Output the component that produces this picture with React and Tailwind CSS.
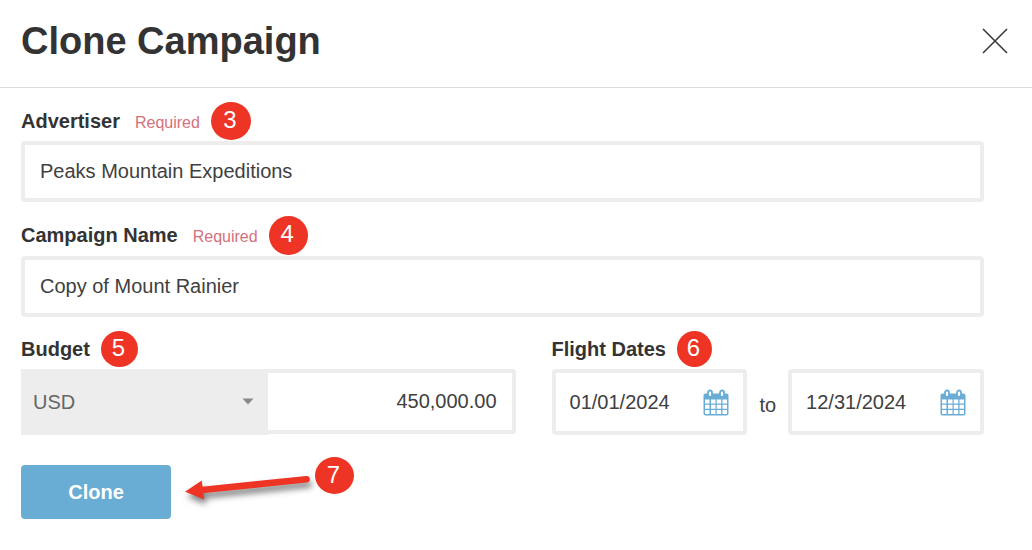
import { useState } from "react";
import clsx from "clsx";

const inputClass =
  "h-[61px] w-full rounded-[4px] border-4 border-[#ededed] bg-white px-[15px] text-[20px] text-[#404040] outline-none";

function Step({ number, className }) {
  return (
    <span
      className={clsx(
        "flex shrink-0 items-center justify-center rounded-[50%] bg-[#ee3424] pr-0.5 pb-0.5 text-[24px] leading-none text-white",
        className
      )}
    >
      {number}
    </span>
  );
}

function FieldLabel({ htmlFor, text, required, children }) {
  return (
    <div className="flex h-10 items-center gap-[11px]">
      <label
        htmlFor={htmlFor}
        className="flex items-baseline gap-[15px] text-[20px] font-bold whitespace-nowrap text-[#333]"
      >
        {text}
        {required && (
          <span className="text-[16px] font-normal text-[#d4717b]">
            Required
          </span>
        )}
      </label>
      {children}
    </div>
  );
}

function CalendarIcon() {
  return (
    <svg width="26" height="27" viewBox="0 0 26 27" fill="none">
      <rect x="0.5" y="4.5" width="25" height="22" rx="2" fill="#69add5" />
      <path
        d="M2 10.500h4.500v4h-4.500zM8 10.500h4.500v4h-4.500zM13.700 10.500h4.500v4h-4.500zM19.500 10.500h4.500v4h-4.500zM2 15.800h4.500v4h-4.500zM8 15.800h4.500v4h-4.500zM13.700 15.800h4.500v4h-4.500zM19.500 15.800h4.500v4h-4.500zM2 21h4.500v4h-4.500zM8 21h4.500v4h-4.500zM13.700 21h4.500v4h-4.500zM19.500 21h4.500v4h-4.500z"
        fill="#fff"
      />
      <rect x="5" y="1.500" width="4" height="6.500" rx="2" fill="#fff" stroke="#69add5" strokeWidth="1.800" />
      <rect x="17" y="1.500" width="4" height="6.500" rx="2" fill="#fff" stroke="#69add5" strokeWidth="1.800" />
    </svg>
  );
}

function DateField({ id, label, value, onChange }) {
  return (
    <div className="flex h-[66px] min-w-0 flex-1 items-center rounded-[4px] border-4 border-[#ededed] bg-white px-3.5">
      <input
        id={id}
        type="text"
        aria-label={label}
        value={value}
        onChange={(e) => onChange(e.target.value)}
        className="w-full min-w-0 flex-1 text-[20px] text-[#404040] outline-none"
      />
      <button type="button" aria-label="Open calendar" className="shrink-0">
        <CalendarIcon />
      </button>
    </div>
  );
}

export default function App() {
  const [advertiser, setAdvertiser] = useState("Peaks Mountain Expeditions");
  const [name, setName] = useState("Copy of Mount Rainier");
  const [currency, setCurrency] = useState("USD");
  const [budget, setBudget] = useState("450,000.00");
  const [start, setStart] = useState("01/01/2024");
  const [end, setEnd] = useState("12/31/2024");

  return (
    <div className="min-h-screen bg-white font-['Liberation_Sans',Arial,sans-serif]">
      <header className="flex items-center justify-between border-b border-[#dcdcdc] pt-3.5 pr-6 pb-[19px] pl-[21px]">
        <h1 className="text-[38px] leading-[54px] font-bold text-[#333]">
          Clone Campaign
        </h1>
        <button type="button" aria-label="Close">
          <svg width="26" height="26" viewBox="0 0 26 26" stroke="#333" strokeWidth="1.5">
            <path d="M1 1L25 25M25 1L1 25" />
          </svg>
        </button>
      </header>

      <form
        className="pt-[13px] pr-12 pb-8 pl-[21px]"
        onSubmit={(e) => e.preventDefault()}
      >
        <FieldLabel htmlFor="advertiser" text="Advertiser" required>
          <Step number={3} className="h-[38px] w-10" />
        </FieldLabel>
        <input
          id="advertiser"
          type="text"
          value={advertiser}
          onChange={(e) => setAdvertiser(e.target.value)}
          className={inputClass}
        />

        <div className="mt-[13px]">
          <FieldLabel htmlFor="name" text="Campaign Name" required>
            <Step number={4} className="size-[39px]" />
          </FieldLabel>
          <input
            id="name"
            type="text"
            value={name}
            onChange={(e) => setName(e.target.value)}
            className={clsx(inputClass, "mt-px")}
          />
        </div>

        <div className="mt-3 flex gap-9">
          <div className="min-w-0 flex-[494]">
            <FieldLabel htmlFor="budget" text="Budget">
              <Step number={5} className="h-9 w-[37px]" />
            </FieldLabel>
            <div className="flex">
              <div className="relative w-1/2">
                <select
                  aria-label="Currency"
                  value={currency}
                  onChange={(e) => setCurrency(e.target.value)}
                  className="h-[66px] w-full appearance-none rounded-none bg-[#ededed] px-3 text-[20px] text-[#666] outline-none"
                >
                  <option>USD</option>
                </select>
                <svg
                  className="pointer-events-none absolute top-[29px] right-3.5"
                  width="12"
                  height="7"
                  viewBox="0 0 12 7"
                >
                  <path d="M0.500 0.500h11L6 6.500z" fill="#888" />
                </svg>
              </div>
              <input
                id="budget"
                type="text"
                value={budget}
                onChange={(e) => setBudget(e.target.value)}
                className="h-[65px] w-1/2 rounded-r-[4px] border-4 border-l-0 border-[#ededed] px-[15px] text-right text-[20px] text-[#404040] outline-none"
              />
            </div>
          </div>

          <div className="min-w-0 flex-[432]">
            <FieldLabel htmlFor="start" text="Flight Dates">
              <Step number={6} className="h-9 w-[35px]" />
            </FieldLabel>
            <div className="flex items-center">
              <DateField id="start" label="Start date" value={start} onChange={setStart} />
              <span className="px-3 pt-1.5 text-[20px] text-[#404040]">to</span>
              <DateField id="end" label="End date" value={end} onChange={setEnd} />
            </div>
          </div>
        </div>

        <div className="mt-[22px] flex items-end">
          <button
            type="submit"
            className="h-[54px] w-[150px] rounded-[4px] bg-[#69add5] text-[20px] font-bold text-white"
          >
            Clone
          </button>
          <svg
            className="ml-3.5 overflow-visible drop-shadow-[2px_5px_3px_rgba(0,0,0,0.5)]"
            width="130"
            height="62"
            viewBox="0 0 130 62"
          >
            <path d="M0 34.800L16.700 23.500L19.300 42.500z" fill="#ee3424" />
            <path d="M17 33L121.500 22.200" stroke="#ee3424" strokeWidth="6.600" strokeLinecap="round" />
          </svg>
          <Step number={7} className="h-[37px] w-[39px] self-start" />
        </div>
      </form>
    </div>
  );
}
